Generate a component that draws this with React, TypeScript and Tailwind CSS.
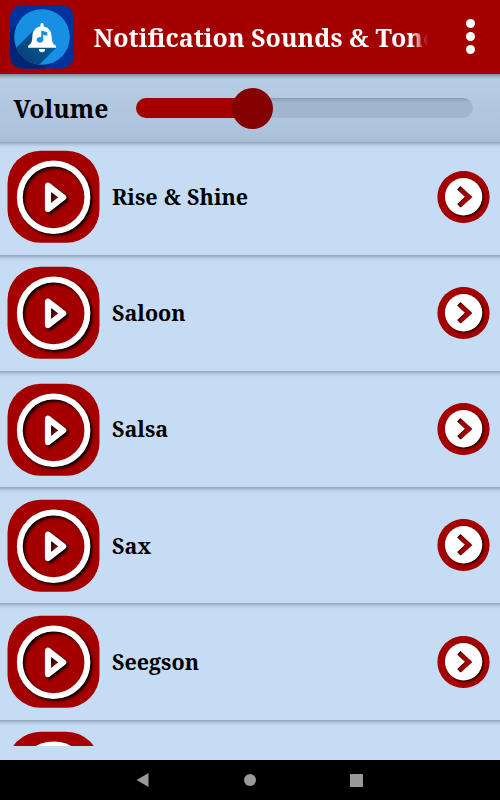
import React from "react";

const sounds = ["Rise & Shine", "Saloon", "Salsa", "Sax", "Seegson"];

function AppIcon() {
  return (
    <svg className="ml-[10px] h-16 w-16 shrink-0" viewBox="0 0 64 64">
      <defs>
        <clipPath id="disc"><circle cx="32" cy="32" r="27.8" /></clipPath>
        <linearGradient id="long" x1="1" y1="0" x2="0" y2="1">
          <stop offset="0" stopColor="#0864a8" />
          <stop offset="1" stopColor="#05305f" />
        </linearGradient>
      </defs>
      <rect width="64" height="63.5" rx="13" fill="#003399" />
      <path d="M9 17 0 26V50Q0 63.500 13 63.500H34L56 47Z" fill="#002574" />
      <circle cx="32" cy="32" r="27.800" fill="#178fe2" />
      <path clipPath="url(#disc)" d="M24 25-2 51V70H19L46 43Z" fill="url(#long)" />
      <path d="M32 18q1.600 0 1.600 1.600v2c5 .8 7.800 4.400 8 9.400.2 5.500.9 8 4.400 9.800v1.900H18v-1.900c3.500-1.800 4.200-4.300 4.400-9.800.2-5 3-8.600 8-9.400v-2Q30.400 18 32 18ZM28.800 44h6.400q-.2 3.300-3.200 3.300t-3.200-3.300Z" fill="white" />
      <path d="M31.200 25.600 37.300 27.200V30.800L33.200 29.900V35h-2Z" fill="#178fe2" />
      <ellipse cx="30" cy="34.700" rx="3.300" ry="2.800" fill="#178fe2" />
    </svg>
  );
}

function PlayIcon() {
  return (
    <svg className="ml-[7px] h-[94px] w-[93px] shrink-0" viewBox="0 0 93 94">
      <rect x="0.5" y="0.700" width="92" height="92" rx="33" fill="#a40000" />
      <g fill="none" stroke="white" className="drop-shadow-[2px_2px_1.500px_rgba(0,0,0,0.95)]">
        <circle cx="46.600" cy="47.300" r="33.800" strokeWidth="5.900" />
        <path d="M41 35.700V59.100L56.200 47.400Z" strokeWidth="6.200" strokeLinejoin="round" />
      </g>
    </svg>
  );
}

function NextIcon() {
  return (
    <svg className="ml-auto mr-[10px] h-[53px] w-[53px] shrink-0" viewBox="0 0.500 53 53">
      <circle cx="26.500" cy="26.500" r="26.100" fill="#a40000" />
      <circle cx="26.600" cy="26.200" r="18.700" fill="white" className="drop-shadow-[1.500px_1.500px_0.800px_rgba(0,0,0,1)]" />
      <path d="m21.800 17.200 9.700 9-9.700 9" fill="none" stroke="#160000" strokeWidth="4.600" />
      <path d="m22.900 18.400 9 8.300-9 8.300" fill="none" stroke="#a40000" strokeWidth="4.400" />
    </svg>
  );
}

export default function App() {
  return (
    <main className="flex h-[800px] w-[500px] flex-col overflow-hidden bg-[#c6dcf4] font-['Noto_Serif','DejaVu_Serif',serif] font-bold text-black">
      <header className="flex h-[74px] shrink-0 items-center bg-[#a40000]">
        <AppIcon />
        <h1 className="ml-[19.500px] w-[334px] overflow-hidden whitespace-nowrap text-[25px] leading-9 text-white [mask-image:linear-gradient(to_right,black_317px,transparent_334px)]">Notification Sounds &amp; Tones</h1>
        <button aria-label="Menu" className="mb-px ml-auto mr-[25px] flex flex-col gap-1">
          {[0, 1, 2].map((n) => <span key={n} className="h-[9px] w-[9px] rounded-full bg-white" />)}
        </button>
      </header>
      <section className="flex h-[68px] shrink-0 items-center bg-[linear-gradient(to_bottom,#71879d_0,#93a9bd_2px,#afc4db_4px,#b6cde5_6px,#adc2dc_60px,#a6bcd4_68px)]">
        <span className="ml-[13.500px] w-[122.500px] pt-px text-[24.800px]">Volume</span>
        <div className="flex h-5 w-[337px] items-center rounded-full bg-[linear-gradient(to_bottom,#8396ac_0,#97abc1_2px,#a1b5cb_5px,#a2b6cf_100%)]">
          <div className="h-full w-[116px] rounded-l-full bg-[#a40000]" />
          <div className="-ml-5 h-[41px] w-[41px] shrink-0 rounded-full bg-[#850000]" />
        </div>
      </section>
      <div className="h-[604px] shrink-0 overflow-hidden">
        {sounds.map((name) => (
          <div key={name} className="flex h-[116.250px] items-start bg-[linear-gradient(to_bottom,#91a6bb_0,#a8bed5_2px,#bdd3eb_4px,#c6dcf4_6px)] pt-[11.750px] first:h-[112.500px] first:pt-2">
            <div className="flex w-full items-center">
              <PlayIcon />
              <span className="ml-3 whitespace-nowrap text-[21.500px] [word-spacing:0.6px]">{name}</span>
              <NextIcon />
            </div>
          </div>
        ))}
        <div className="flex h-[116.250px] items-start bg-[linear-gradient(to_bottom,#91a6bb_0,#a8bed5_2px,#bdd3eb_4px,#c6dcf4_6px)] pt-[11.750px]">
          <PlayIcon />
        </div>
      </div>
      <div className="h-[14px] shrink-0 bg-[#c6dcf4]" />
      <nav className="flex h-10 shrink-0 items-center bg-black">
        <svg className="ml-[136px] h-4 w-[13px]" viewBox="0 0 13 16"><path d="M.5 8 12.500 1V15Z" fill="#999" /></svg>
        <span className="ml-[95px] h-3 w-3 rounded-full bg-[#999]" />
        <span className="ml-[94px] h-[13px] w-[13px] rounded-[1px] bg-[#999]" />
      </nav>
    </main>
  );
}
